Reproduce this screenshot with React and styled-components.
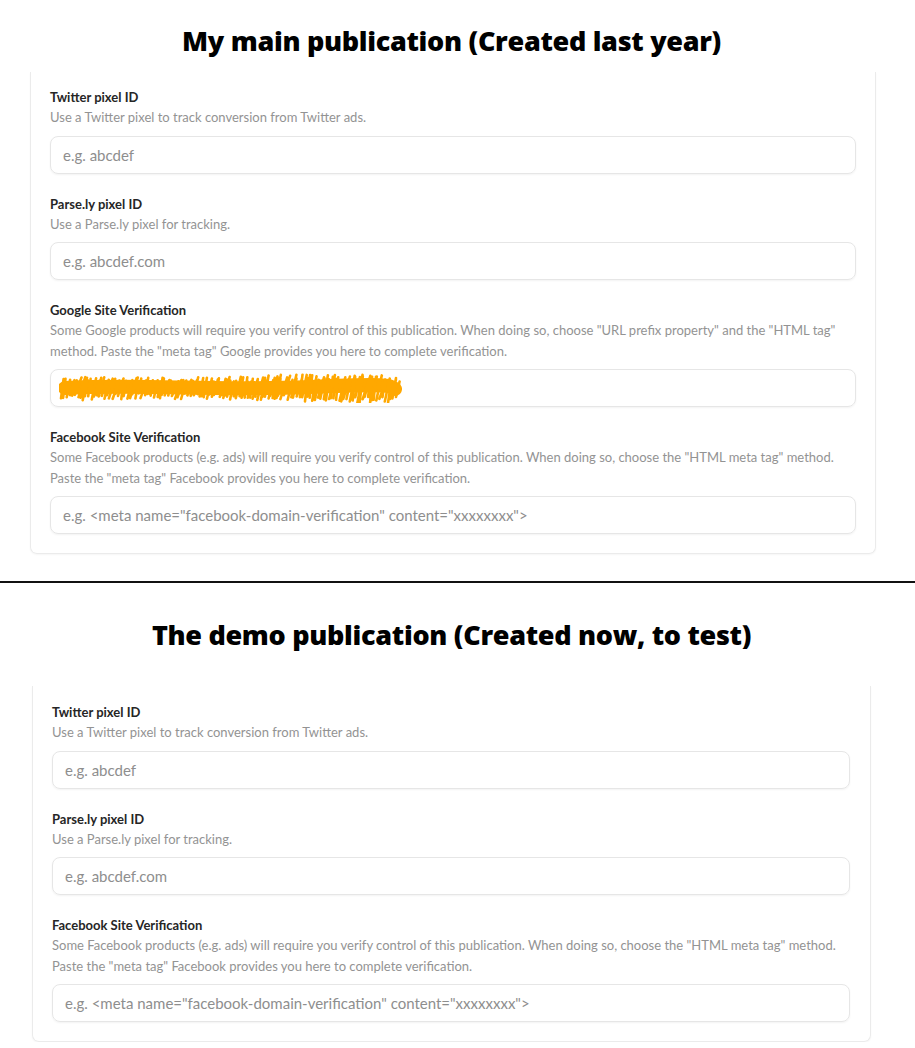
import React from 'react';
import styled, { createGlobalStyle } from 'styled-components';

const GlobalStyle = createGlobalStyle`
  html, body {
    margin: 0;
    padding: 0;
    background: #fff;
  }
  body {
    font-family: Lato, "Open Sans", sans-serif;
    -webkit-font-smoothing: antialiased;
  }
`;

const Page = styled.div`
  width: 915px;
  display: flex;
  flex-direction: column;
`;

const Section = styled.section`
  display: flex;
  flex-direction: column;
  padding-top: ${p => p.$top}px;
`;

const Heading = styled.h1`
  margin: 0;
  padding-right: 12px;
  text-align: center;
  font-family: "Open Sans", sans-serif;
  font-weight: 800;
  font-size: 27px;
  line-height: 34px;
  color: #000;
  letter-spacing: -0.3px;
`;

const Card = styled.div`
  margin: ${p => p.$gap}px ${p => p.$right}px 0 ${p => p.$left}px;
  padding: ${p => p.$padTop}px ${p => p.$padRight}px 19px 19px;
  border: 1px solid #ebebeb;
  border-top: none;
  border-radius: 0 0 7px 7px;
  box-shadow: 0 1px 2px rgba(0, 0, 0, 0.04);
  display: flex;
  flex-direction: column;
  gap: 21px;
`;

const Field = styled.div`
  display: flex;
  flex-direction: column;
`;

const Label = styled.label`
  font-size: 13px;
  line-height: 18px;
  font-weight: 700;
  color: #262626;
`;

const Hint = styled.p`
  margin: 1px 0 0;
  font-size: 13px;
  line-height: 20.5px;
  color: #939393;
`;

const Input = styled.div`
  margin-top: 8px;
  height: 38px;
  box-sizing: border-box;
  border: 1px solid #e6e6e6;
  border-radius: 8px;
  box-shadow: 0 1px 2px rgba(0, 0, 0, 0.05);
  display: flex;
  align-items: center;
  padding: 0 12px;
  font-size: 15px;
  color: #8e8e8e;
  white-space: nowrap;
  overflow: hidden;
`;

const Divider = styled.hr`
  margin: 27px 0 0;
  border: none;
  height: 2px;
  background: #111;
`;

function Scribble() {
  // hand-drawn redaction over the filled field
  let seed = 7;
  const rnd = () => {
    seed = (seed * 9301 + 49297) % 233280;
    return seed / 233280;
  };
  const strokes = [];
  let x = 2;
  while (x < 338) {
    const top = 3 + rnd() * 6 + Math.sin(x / 55) * 1.5;
    const bot = 22 + rnd() * 6 - Math.sin(x / 70) * 2;
    const lean = 2 + rnd() * 5;
    strokes.push(`M${x.toFixed(1)} ${bot.toFixed(1)} L${(x + lean).toFixed(1)} ${top.toFixed(1)}`);
    x += 1.6 + rnd() * 2.2;
  }
  return (
    <svg width="345" height="30" viewBox="0 0 345 30" style={{ marginLeft: -4 }}>
      <path d="M6 15 C 80 11, 160 18, 250 14 S 330 13, 336 16" stroke="#FFA800" strokeWidth="14" fill="none" strokeLinecap="round" />
      <path d={strokes.join(' ')} stroke="#FFA800" strokeWidth="2.6" fill="none" strokeLinecap="round" />
    </svg>
  );
}

const mainFields = [
  { label: 'Twitter pixel ID', hint: ['Use a Twitter pixel to track conversion from Twitter ads.'], placeholder: 'e.g. abcdef' },
  { label: 'Parse.ly pixel ID', hint: ['Use a Parse.ly pixel for tracking.'], placeholder: 'e.g. abcdef.com' },
  {
    label: 'Google Site Verification',
    hint: [
      'Some Google products will require you verify control of this publication. When doing so, choose "URL prefix property" and the "HTML tag"',
      'method. Paste the "meta tag" Google provides you here to complete verification.',
    ],
    redacted: true,
  },
  {
    label: 'Facebook Site Verification',
    hint: [
      'Some Facebook products (e.g. ads) will require you verify control of this publication. When doing so, choose the "HTML meta tag" method.',
      'Paste the "meta tag" Facebook provides you here to complete verification.',
    ],
    placeholder: 'e.g. <meta name="facebook-domain-verification" content="xxxxxxxx">',
  },
];

const demoFields = mainFields.filter(f => !f.redacted);

function FieldBlock({ field }) {
  return (
    <Field>
      <Label>{field.label}</Label>
      <Hint>
        {field.hint.map((line, i) => (
          <React.Fragment key={i}>
            {i > 0 && <br />}
            {line}
          </React.Fragment>
        ))}
      </Hint>
      <Input>{field.redacted ? <Scribble /> : field.placeholder}</Input>
    </Field>
  );
}

export default function App() {
  return (
    <Page>
      <GlobalStyle />
      <Section $top={24}>
        <Heading>My main publication (Created last year)</Heading>
        <Card $gap={14} $left={30} $right={39} $padTop={16} $padRight={19}>
          {mainFields.map(f => (
            <FieldBlock key={f.label} field={f} />
          ))}
        </Card>
      </Section>
      <Divider />
      <Section $top={35}>
        <Heading>The demo publication (Created now, to test)</Heading>
        <Card $gap={34} $left={32} $right={44} $padTop={17} $padRight={20}>
          {demoFields.map(f => (
            <FieldBlock key={f.label} field={f} />
          ))}
        </Card>
      </Section>
    </Page>
  );
}
